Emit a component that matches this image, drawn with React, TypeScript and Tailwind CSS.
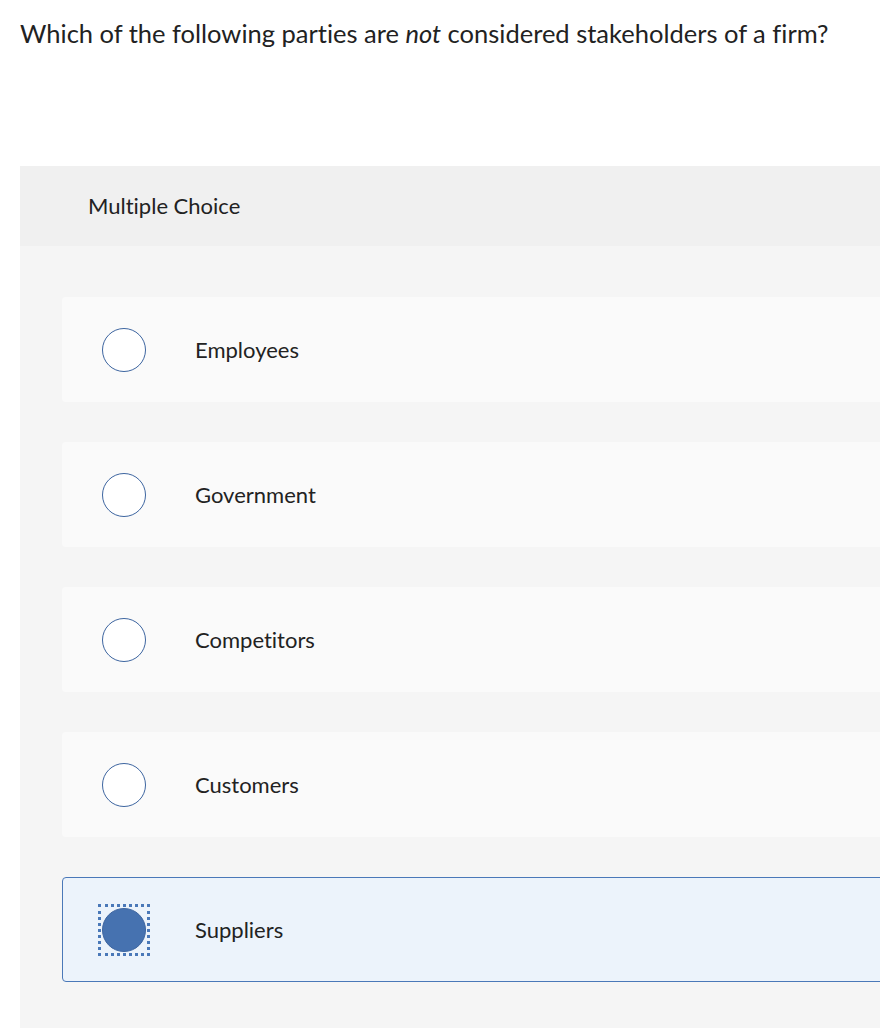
const options = ['Employees', 'Government', 'Competitors', 'Customers', 'Suppliers'];
const selected = 4;

export default function App() {
  return (
    <div className="w-[880px] h-[1028px] overflow-hidden bg-white text-[#222] font-['Lato',sans-serif] [font-variant-ligatures:none]">
      <h1 className="pl-[20px] pt-[17px] text-[25.5px] leading-[32px] font-normal">
        Which of the following parties are <em>not</em> considered stakeholders of a firm?
      </h1>

      <div className="ml-[20px] mt-[117px] w-[900px] bg-[#f5f5f5] min-h-[900px]">
        <div className="h-[80px] bg-[#f0f0f0] flex items-center pl-[68px] pb-[2px] text-[22px]">Multiple Choice</div>

        <div className="pt-[51px] pl-[42px] flex flex-col gap-[40px]">
          {options.map((label, i) => {
            const on = i === selected;
            return (
              <div
                key={label}
                className={
                  on
                    ? 'h-[105px] rounded-[4px] border border-[#4a78b8] bg-[#ecf3fb] flex items-center pl-[39px]'
                    : 'h-[105px] rounded-[4px] border border-transparent bg-[#fafafa] flex items-center pl-[39px]'
                }
              >
                {on ? (
                  <div className="outline-[3px] outline-dotted outline-offset-[1px] outline-[#4a78b8]">
                    <div className="w-[44px] h-[44px] rounded-full bg-[#4672b0] border border-[#3d65a0]" />
                  </div>
                ) : (
                  <div className="w-[44px] h-[44px] rounded-full bg-white border border-[#3d65a0]" />
                )}
                <span className="ml-[49px] text-[22px]">{label}</span>
              </div>
            );
          })}
        </div>
      </div>
    </div>
  );
}
